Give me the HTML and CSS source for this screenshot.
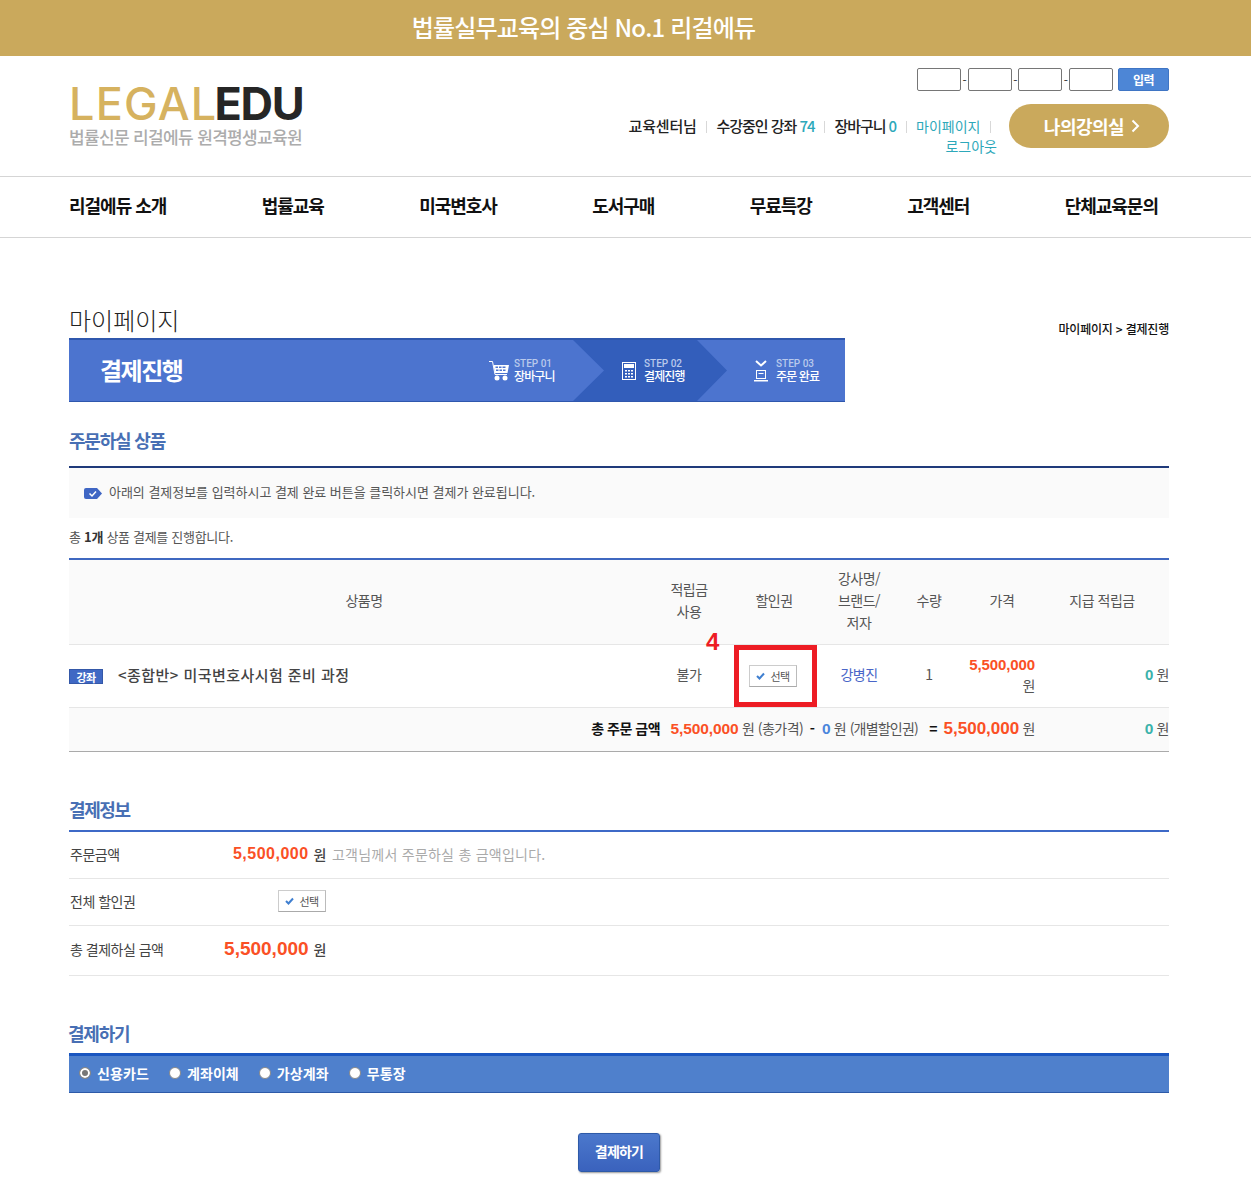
FILE: index.html
```html
<!DOCTYPE html>
<html lang="ko">
<head>
	<meta charset="utf-8">
	<title>결제진행</title>
	<link rel="stylesheet" href="styles.css">
</head>
<body>
	<div class="banner">법률실무교육의 중심 No.1 리걸에듀</div>

	<div class="header">
		<a class="logo" href="#">
			<span class="logo-word"><span class="logo-gold">LEGAL</span><span class="logo-dark">EDU</span></span>
			<span class="logo-sub">법률신문 리걸에듀 원격평생교육원</span>
		</a>
		<div class="header-right">
			<div class="coupon-row">
				<input class="coupon" type="text"><i>-</i><input class="coupon" type="text"><i>-</i><input class="coupon" type="text"><i>-</i><input class="coupon" type="text">
				<a class="coupon-btn" href="#">입력</a>
			</div>
			<div class="util-row">
				<div class="util">
					<span class="who">교육센터님</span><b></b><span>수강중인 강좌 <em>74</em></span><b></b><span>장바구니 <em>0</em></span><b></b><a href="#">마이페이지</a><b class="last"></b><br>
					<a href="#">로그아웃</a>
				</div>
				<a class="myroom" href="#">나의강의실
					<svg width="9" height="14" viewBox="0 0 9 14"><path d="M1.500 1.500 7 7l-5.500 5.500" fill="none" stroke="#fff" stroke-width="2"/></svg>
				</a>
			</div>
		</div>
	</div>

	<div class="nav">
		<div class="nav-inner">
			<a href="#">리걸에듀 소개</a>
			<a href="#">법률교육</a>
			<a href="#">미국변호사</a>
			<a href="#">도서구매</a>
			<a href="#">무료특강</a>
			<a href="#">고객센터</a>
			<a href="#">단체교육문의</a>
		</div>
	</div>

	<div class="wrap">
		<div class="page-head">
			<h1>마이페이지</h1>
			<div class="crumb">마이페이지 &gt; 결제진행</div>
		</div>

		<div class="stepbar">
			<h2>결제진행</h2>
			<div class="steps">
				<div class="step step1">
					<svg width="20" height="21" viewBox="0 0 20 21" fill="#fff">
						<path d="M0 1.500h3.500l2.500 13h12" fill="none" stroke="#fff" stroke-width="1"/>
						<path d="M4.500 5H20l-1.500 8H6zM6.500 6.500v1.500h2.500V6.500zm3.500 0v1.500h2.500V6.500zm3.500 0v1.500h3V6.500zM7 9.500V11h2.500V9.500zm3.500 0V11H13V9.500zm3.500 0V11h2.500V9.500z" fill-rule="evenodd"/>
						<circle cx="8" cy="18" r="2.500"/><circle cx="16" cy="18" r="2.500"/>
					</svg>
					<div class="step-txt"><span>STEP 01</span><strong>장바구니</strong></div>
				</div>
				<div class="step step2">
					<svg width="14" height="18" viewBox="0 0 14 18">
						<rect x=".5" y=".5" width="13" height="17" fill="none" stroke="#fff"/>
						<rect x="2" y="2" width="10" height="4" fill="#fff"/>
						<path d="M3 8h2v1.500H3zm3 0h2v1.500H6zm3 0h2v1.500H9zM3 11h2v1.500H3zm3 0h2v1.500H6zm3 0h2v1.500H9zM3 14h2v1.500H3zm3 0h2v1.500H6zm3 0h2v1.500H9z" fill="#fff"/>
					</svg>
					<div class="step-txt"><span>STEP 02</span><strong>결제진행</strong></div>
				</div>
				<div class="step step3">
					<svg width="14" height="22" viewBox="0 0 14 22">
						<path d="M2 1l5 4.500L12 1" fill="none" stroke="#fff" stroke-width="2"/>
						<rect x="2.500" y="10.500" width="9" height="8" fill="none" stroke="#fff"/>
						<path d="M4.500 13h5v1h-5zM0 20h14v1.500H0z" fill="#fff"/>
					</svg>
					<div class="step-txt"><span>STEP 03</span><strong>주문 완료</strong></div>
				</div>
			</div>
		</div>

		<h3 class="sec-title first">주문하실 상품</h3>
		<div class="notice">
			<svg width="18" height="11" viewBox="0 0 18 11">
				<path d="M2 0h11l5 5.500-5 5.500H2a2 2 0 0 1-2-2V2a2 2 0 0 1 2-2z" fill="#3f66c4"/>
				<path d="M5.500 5.500 8 8l4-4.500" fill="none" stroke="#fff" stroke-width="1.500"/>
			</svg>
			<span>아래의 결제정보를 입력하시고 결제 완료 버튼을 클릭하시면 결제가 완료됩니다.</span>
		</div>
		<p class="count">총 <b>1개</b> 상품 결제를 진행합니다.</p>

		<table class="order">
			<colgroup>
				<col class="c-name"><col class="c-point"><col class="c-coupon"><col class="c-teacher"><col class="c-qty"><col class="c-price"><col class="c-save">
			</colgroup>
			<thead>
				<tr>
					<th>상품명</th>
					<th>적립금<br>사용</th>
					<th>할인권</th>
					<th>강사명/<br>브랜드/<br>저자</th>
					<th>수량</th>
					<th>가격</th>
					<th>지급 적립금</th>
				</tr>
			</thead>
			<tbody>
				<tr class="item">
					<td class="name"><span class="tag">강좌</span><span class="course">&lt;종합반&gt; 미국변호사시험 준비 과정</span></td>
					<td>불가</td>
					<td class="coupon-cell">
						<span class="annot-num">4</span>
						<span class="annot-box"></span>
						<a class="pick" href="#"><svg width="9" height="8" viewBox="0 0 9 8"><path d="M1 4l2.500 2.500L8 1.500" fill="none" stroke="#3f7fd0" stroke-width="2"/></svg>선택</a>
					</td>
					<td><a class="teacher" href="#">강병진</a></td>
					<td>1</td>
					<td class="price"><span class="num red">5,500,000</span> 원</td>
					<td class="save"><span class="num green">0</span> 원</td>
				</tr>
				<tr class="total">
					<td colspan="6">
						<b>총 주문 금액</b>
						<span class="num red">5,500,000</span> 원 (총가격)
						<b class="op">-</b> <span class="num blue">0</span> 원 <span class="tight">(개별할인권)</span>
						<b class="op eq">=</b> <span class="num red big">5,500,000</span> 원
					</td>
					<td class="save"><span class="num green">0</span> 원</td>
				</tr>
			</tbody>
		</table>

		<h3 class="sec-title pay">결제정보</h3>
		<div class="pay-list">
			<div class="pay-row">
				<div class="pay-label">주문금액</div>
				<div class="pay-val"><span class="num red mid">5,500,000</span> <span class="won">원</span></div>
				<div class="pay-note">고객님께서 주문하실 총 금액입니다.</div>
			</div>
			<div class="pay-row">
				<div class="pay-label">전체 할인권</div>
				<div class="pay-val"><a class="pick" href="#"><svg width="9" height="8" viewBox="0 0 9 8"><path d="M1 4l2.500 2.500L8 1.500" fill="none" stroke="#3f7fd0" stroke-width="2"/></svg>선택</a></div>
			</div>
			<div class="pay-row tall">
				<div class="pay-label">총 결제하실 금액</div>
				<div class="pay-val"><span class="num red large">5,500,000</span> <span class="won">원</span></div>
			</div>
		</div>

		<h3 class="sec-title method">결제하기</h3>
		<div class="method-bar">
			<label><input type="radio" name="pay" checked>신용카드</label>
			<label><input type="radio" name="pay">계좌이체</label>
			<label><input type="radio" name="pay">가상계좌</label>
			<label><input type="radio" name="pay">무통장</label>
		</div>

		<div class="submit-row"><a class="submit" href="#">결제하기</a></div>
	</div>
</body>
</html>
```

FILE: styles.css
```css
*{margin:0;padding:0;box-sizing:border-box;}
body{
	font-family:"Noto Sans CJK KR","Liberation Sans",sans-serif;
	font-size:14px;
	color:#555;
	background:#fff;
	letter-spacing:-0.5px;
}
a{color:inherit;text-decoration:none;}
em{font-style:normal;}

/* top */
.banner{
	height:56px;
	line-height:54px;
	padding-right:84px;
	background:#caa95c;
	color:#fff;
	font-size:24px;
	font-weight:500;
	letter-spacing:-0.85px;
	text-align:center;
}
.header{
	width:1100px;
	height:120px;
	margin-left:69px;
	display:flex;
	justify-content:space-between;
}
.logo{display:block;padding-top:29px;width:240px;}
.logo-word{
	display:block;
	height:38px;
	line-height:38px;
	font-family:"Inter",sans-serif;
	font-size:45px;
	font-weight:500;
	letter-spacing:1.2px;
	white-space:nowrap;
}
.logo-gold{color:#d6b25f;margin-right:-3px;}
.logo-dark{color:#262626;font-weight:700;letter-spacing:-1.3px;}
.logo-sub{
	display:block;
	margin-top:2px;
	font-size:17px;
	line-height:24px;
	font-weight:500;
	color:#acacac;
	letter-spacing:-0.65px;
	white-space:nowrap;
}
.header-right{
	display:flex;
	flex-direction:column;
	align-items:flex-end;
	padding-top:12px;
}
.coupon-row{display:flex;align-items:center;height:23px;}
.coupon-row i{width:6.7px;text-align:center;font-style:normal;font-size:12px;line-height:23px;color:#333;}
.coupon{
	width:44px;
	height:23px;
	border:1px solid #767676;
	border-radius:2px;
	background:#fff;
}
.coupon-btn{
	width:51px;
	height:23px;
	margin-left:5px;
	line-height:21px;
	text-align:center;
	font-size:12px;
	font-weight:700;
	color:#fff;
	background:#4d86d6;
	border:1px solid #3f75c4;
	border-radius:2px;
}
.util-row{display:flex;margin-top:13px;}
.util{
	width:376px;
	padding-top:12px;
	text-align:right;
	font-size:14px;
	line-height:20px;
	color:#222;
	letter-spacing:0;
	margin-left:-6px;
	white-space:nowrap;
}
.util span{font-size:15px;font-weight:500;letter-spacing:-1.050px;}
.util .who{letter-spacing:-0.2px;}
.util b{
	display:inline-block;
	width:1px;
	height:12px;
	margin:0 9.5px;
	background:#d8d8d8;
	vertical-align:-1px;
}
.util b.last{margin-right:6px;}
.util em,.util a{color:#2da8ba;}
.myroom{
	width:160px;
	height:44px;
	margin-left:12px;
	padding-left:6px;
	border-radius:22px;
	background:#caa95c;
	color:#fff;
	font-size:18px;
	font-weight:700;
	letter-spacing:-0.5px;
	display:flex;
	align-items:center;
	justify-content:center;
	gap:7px;
}
.nav{
	height:62px;
	border-top:1px solid #d5d5d5;
	border-bottom:1px solid #d5d5d5;
}
.nav-inner{
	width:1100px;
	margin-left:69px;
	height:60px;
	padding:0 11px 4px 0;
	display:flex;
	justify-content:space-between;
	align-items:center;
	font-size:18px;
	font-weight:700;
	color:#111;
	letter-spacing:-1px;
}

/* content */
.wrap{width:1100px;margin-left:69px;padding-bottom:23px;}
.page-head{
	display:flex;
	justify-content:space-between;
	align-items:flex-end;
	height:100px;
}
.page-head h1{
	font-size:24px;
	line-height:36px;
	font-weight:300;
	color:#222;
	letter-spacing:0;
}
.crumb{
	font-size:12px;
	font-weight:500;
	color:#111;
	line-height:18px;
	letter-spacing:-0.2px;
}
.stepbar{
	width:776px;
	height:64px;
	display:flex;
	justify-content:space-between;
	background:#4c74cf;
	border-top:2px solid #2f57ad;
	border-bottom:1px solid #2f57ad;
}
.stepbar h2{
	padding-left:31px;
	font-size:24px;
	line-height:60px;
	font-weight:700;
	color:#fff;
	letter-spacing:-1.500px;
}
.steps{display:flex;}
.step{display:flex;align-items:center;color:#fff;}
.step1{width:84px;gap:5px;}
.step2{
	width:154px;
	padding-left:49px;
	gap:8px;
	background:#335ebb;
	clip-path:polygon(0 0,124px 0,100% 50%,124px 100%,0 100%,31px 50%);
}
.step3{width:118px;padding-left:27px;gap:8px;}
.step-txt span{
	display:block;
	font-size:10px;
	line-height:11px;
	font-family:"Roboto",sans-serif;
	font-weight:500;
	letter-spacing:0;
	color:#b9c9ec;
}
.step-txt strong{
	display:block;
	font-size:12px;
	line-height:14px;
	font-weight:500;
	letter-spacing:-0.9px;
}
.sec-title{
	font-size:18px;
	font-weight:700;
	color:#486fb4;
	letter-spacing:-1.2px;
	line-height:24px;
}
.sec-title.first{
	margin-top:26px;
	height:38px;
	border-bottom:2px solid #1f3a7a;
	box-sizing:content-box;
}
.notice{
	height:50px;
	display:flex;
	align-items:center;
	gap:7px;
	padding-left:15px;
	background:#fafafa;
	font-size:13px;
	letter-spacing:-0.03px;
}
.notice span{padding-bottom:3px;}
.count{
	height:40px;
	line-height:37px;
	font-size:13px;
	letter-spacing:-0.3px;
	border-bottom:2px solid #3f68c0;
	box-sizing:content-box;
}
.count b{color:#333;}

.order{
	width:1100px;
	table-layout:fixed;
	border-collapse:collapse;
	border-bottom:1px solid #aaa;
}
.c-name{width:590px;}
.c-point{width:60px;}
.c-coupon{width:110px;}
.c-teacher{width:60px;}
.c-qty{width:80px;}
.c-price{width:66px;}
.c-save{width:134px;}
.order th{
	height:84px;
	padding-bottom:3px;
	background:#fafafa;
	border-bottom:1px solid #e6e6e6;
	font-weight:400;
	line-height:22px;
	text-align:center;
}
.order td{text-align:center;vertical-align:middle;}
.item td{height:63px;padding-bottom:3px;border-bottom:1px solid #e6e6e6;line-height:22px;}
.order .name{text-align:left;padding-bottom:2px;}
.tag{
	display:inline-block;
	width:34px;
	height:15px;
	line-height:14px;
	margin-right:15px;
	text-align:center;
	font-size:11px;
	font-weight:700;
	color:#fff;
	background:#4068c4;
	border:1px solid #3458a8;
	vertical-align:-1px;
}
.course{font-size:15px;font-weight:500;color:#444;letter-spacing:0.45px;}
.order .coupon-cell{position:relative;padding-right:2px;padding-bottom:2px;}
.annot-num{
	position:absolute;
	left:-13px;
	top:-17px;
	font-family:"Liberation Sans",sans-serif;
	font-size:24px;
	line-height:28px;
	font-weight:700;
	color:#ed1c24;
}
.annot-box{
	position:absolute;
	left:15px;
	top:0;
	width:83px;
	height:62px;
	border:5px solid #ed1c24;
}
.pick{
	display:inline-flex;
	align-items:center;
	justify-content:center;
	gap:5px;
	width:48px;
	height:22px;
	font-size:11px;
	color:#555;
	background:#fff;
	border:1px solid #ccc;
	border-bottom-color:#aaa;
	border-right-color:#bbb;
}
.teacher{color:#4a66c8;}
.num{font-family:"Liberation Sans","Noto Sans CJK KR",sans-serif;font-weight:700;font-size:15px;letter-spacing:-0.1px;}
.red{color:#fa5025;}
.blue{color:#4b86dc;}
.green{color:#3cb2ab;}
.total .num{font-size:15.500px;}
.total .big{font-size:17px;letter-spacing:0;}
.tight{letter-spacing:-0.8px;}
.mid{font-size:16px;letter-spacing:.5px;}
.large{font-size:19px;letter-spacing:0;}
.order .price{text-align:right;line-height:21px;padding-bottom:2px;}
.order .save{text-align:right;}
.order .total td{height:44px;padding-bottom:2px;background:#fafafa;text-align:right;white-space:nowrap;}
.total b{color:#111;font-weight:700;margin-right:7px;}
.total .op{margin:0 4px 0 3px;}
.total .eq{margin:0 3px 0 8px;}

.sec-title.pay{
	margin-top:46px;
	height:34px;
	line-height:22px;
	letter-spacing:-1.400px;
	border-bottom:2px solid #3d69c7;
	box-sizing:border-box;
}
.pay-row{
	display:flex;
	align-items:center;
	height:47px;
	border-bottom:1px solid #e6e6e6;
	padding:0 0 2px 1px;
}
.pay-row.tall{height:50px;}
.pay-label{width:140px;color:#444;}
.pay-val{width:116px;text-align:right;white-space:nowrap;display:flex;justify-content:flex-end;align-items:center;gap:5px;}
.pay-note{margin-left:6px;color:#aaa;letter-spacing:0.24px;}
.won{color:#444;font-weight:500;}

.sec-title.method{margin-top:44px;margin-left:-1px;height:33px;line-height:26px;letter-spacing:-1.200px;}
.method-bar{
	height:40px;
	display:flex;
	align-items:center;
	gap:20px;
	padding:0 0 2px 10px;
	background:#4f80cc;
	border-top:3px solid #1a56c0;
	border-bottom:1px solid #2d5aa8;
	color:#fff;
	font-size:14px;
	font-weight:700;
	letter-spacing:0.1px;
}
.method-bar label{display:flex;align-items:center;gap:6px;}
.method-bar input{
	appearance:none;
	width:12px;
	height:12px;
	border-radius:50%;
	background:#fff;
	border:1px solid #8a8a8a;
}
.method-bar input:checked{
	background:#777;
	box-shadow:inset 0 0 0 2px #fff;
}
.submit-row{padding-top:40px;text-align:center;}
.submit{
	display:inline-block;
	width:82px;
	height:39px;
	line-height:35px;
	border-radius:3px;
	border:1px solid #2e5aa8;
	background:linear-gradient(#4b78cc,#3a62bd);
	box-shadow:1px 1px 2px #999;
	color:#fff;
	font-size:14px;
	font-weight:700;
	letter-spacing:-0.8px;
}
```
